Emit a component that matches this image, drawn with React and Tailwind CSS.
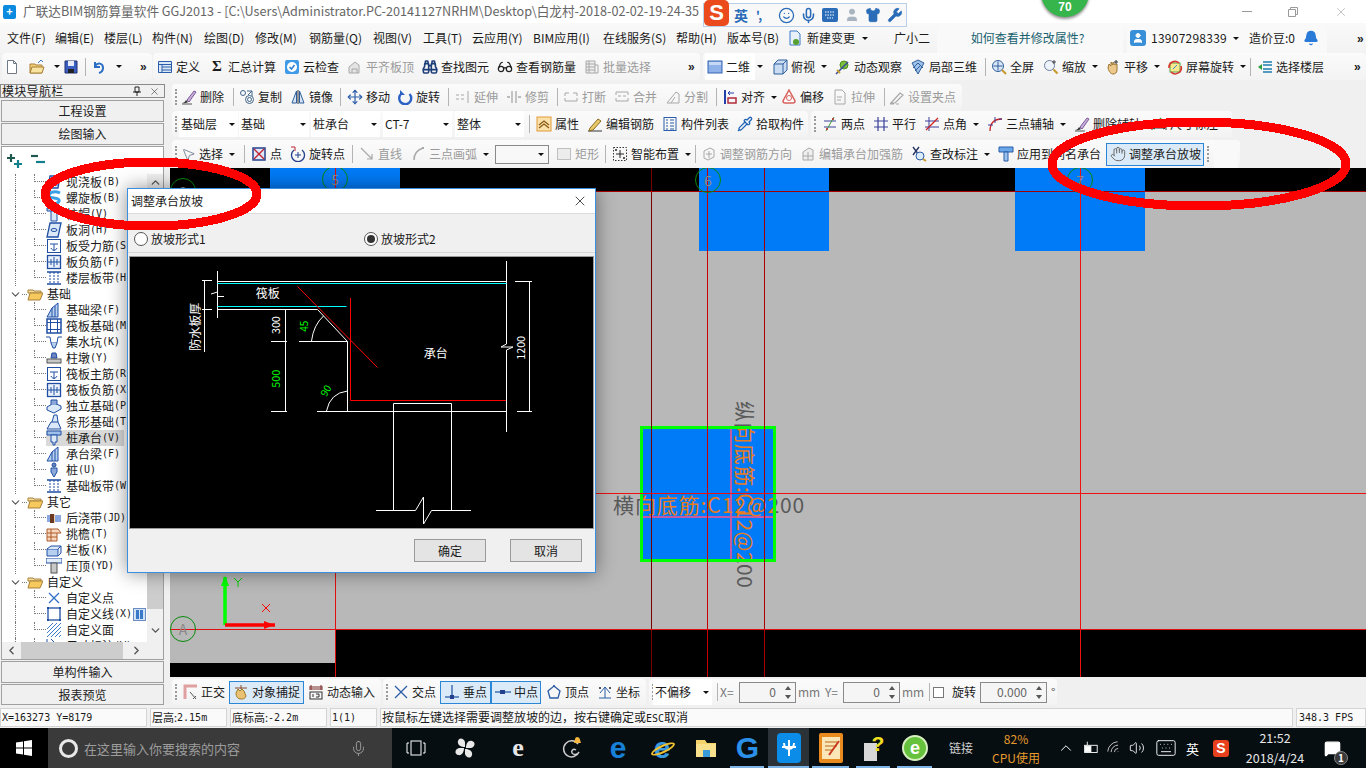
import React from 'react';
import { X, ChevronUp, ChevronDown, ChevronLeft, ChevronRight, Mic, Volume2, Wifi, Keyboard, Move, Pipette, Binoculars, Glasses, Shirt, Wrench, Smile, MessageSquare, Hand, MousePointer2, User, Bell } from 'lucide-react';

const B = '#1f4ea3';
const G = '#a8a8a8';

// toolbar + tree icons, all on a 16 grid
const I = ({ children }) => <svg viewBox="0 0 16 16" className="w-4 h-4 shrink-0" fill="none">{children}</svg>;

const ic = {
  doc: <I><path d="M3.5 1.5h6l3 3v10h-9z" fill="#fff" stroke="#6f7a86" /><path d="M9.5 1.5v3h3" stroke="#6f7a86" /></I>,
  open: <I><path d="M1 5h5l1 1h6v8H1z" fill="#f2cf74" stroke="#a8803a" /><path d="M3 8h12l-2 6H1z" fill="#f8e3a0" stroke="#a8803a" /><path d="M9 4l3-3 2 2" stroke="#3a7bc8" /></I>,
  save: <I><path d="M2 2h12v12H2z" fill="#3a5fc0" stroke="#1e2f70" /><path d="M5 2h6v5H5z" fill="#e6ecf8" /><path d="M5 10h6v4H5z" fill="#222" /></I>,
  undo: <I><path d="M4 3v5h5" stroke="#2c6fc4" strokeWidth="2" /><path d="M4 7c3-4 8-3 8 2 0 2-1 4-4 5" stroke="#2c6fc4" strokeWidth="2" /></I>,
  define: <I><path d="M1.5 2.5h13v11h-13z" fill="#dbe8f8" stroke="#2b5da8" /><path d="M1.5 5.5h13M5 5.5v8M5 8h9M5 11h9" stroke="#2b5da8" /></I>,
  sigma: <span className="w-4 h-4 shrink-0 flex items-center justify-center text-[15px] font-bold leading-none [font-family:'Liberation_Serif',serif]">Σ</span>,
  cloud: <I><rect x="1" y="1" width="14" height="14" rx="2" fill="#3f9be8" /><circle cx="8" cy="8" r="5" fill="#fff" /><path d="M5.5 8l2 2 3-4" stroke="#2c7ed0" strokeWidth="1.5" /></I>,
  flush: <I><path d="M2 14V8l6-5 4 3v8z" fill="#e4e4e4" stroke={G} /><path d="M5 14v-4h5v4" stroke={G} /></I>,
  bino: <span className="w-4 h-4 shrink-0 text-[#1d3e78]"><Binoculars size={16} strokeWidth={2.4} /></span>,
  glass: <span className="w-4 h-4 shrink-0 text-[#222]"><Glasses size={16} strokeWidth={1.8} /></span>,
  batch: <I><path d="M2 2h9v12H2z" fill="#eee" stroke={G} /><path d="M2 5h9M2 8h9M2 11h9M5 2v12M11 6h3v8h-3" stroke={G} /></I>,
  square: <I><rect x="1" y="2" width="14" height="12" fill="#8fb3e8" stroke="#3463b4" /><rect x="2" y="3" width="12" height="3" fill="#c6daf6" /></I>,
  box3d: <I><path d="M2 5l4-4h9v10l-4 4H2z" fill="#c9dcf2" stroke="#2e5f9c" /><path d="M2 5h9v10M11 5l4-4" stroke="#2e5f9c" /></I>,
  orbit: <I><circle cx="9" cy="6" r="4" fill="#7ec03a" stroke="#4a8c1e" /><path d="M1 15l12-12" stroke="#3a4c9a" strokeWidth="1.6" /><path d="M2 11l3 3" stroke="#c8a030" strokeWidth="2" /></I>,
  cubes: <I><path d="M8 1l6 3-6 11-6-11z" fill="#9fc0e8" stroke="#2e5f9c" /><path d="M3 9l5-5 5 5M5 12l6-6" stroke="#2e5f9c" /></I>,
  full: <I><circle cx="7" cy="7" r="5.5" fill="#dbe6f6" stroke="#2e5f9c" /><path d="M7 2.5v9M2.5 7h9" stroke="#2e5f9c" /><path d="M11 11l4 4" stroke="#c89a2e" strokeWidth="2" /></I>,
  zoom: <I><circle cx="6.5" cy="6.5" r="5" fill="#eef3fb" stroke="#6c7f9c" /><path d="M10.5 10.5l4 4" stroke="#c89a2e" strokeWidth="2.2" /><path d="M11 1v4M13 3H9" stroke="#444" /></I>,
  pan: <I><path d="M3 9l1-4 2 2V3l2 3V3l2 3 2-1v6c0 3-2 4-4 4s-4-2-5-6z" fill="#ecc98a" stroke="#9a7532" /><path d="M11 1v4M9 3h4" stroke="#333" /></I>,
  rot: <I><rect x="3" y="4" width="10" height="9" fill="#f8e88e" stroke="#54a04c" /><path d="M2 9a6 6 0 0 1 10-5M14 7a6 6 0 0 1-10 6" stroke="#d8382c" strokeWidth="1.6" /><path d="M6 10l4-4" stroke="#3a8ad0" /></I>,
  floors: <I><path d="M6 3h9M6 6h9M6 10h9M6 13h9" stroke="#1e7fb0" strokeWidth="1.6" /><path d="M1 8l4-3v6z" fill="#2aa040" /></I>,
  brush: <I><path d="M1 14c2 0 3-1 4-3l2 2c-1 1-3 1.5-6 1z" fill="#333" /><path d="M6 11L13 2l2 1-7 10z" fill="#c8b0d8" stroke="#7a5a9a" /><path d="M1 15h10" stroke="#555" /></I>,
  copy: <I><circle cx="4" cy="4" r="2.5" stroke="#41668c" /><circle cx="10.5" cy="10.5" r="4" stroke="#41668c" /><circle cx="10.5" cy="10.5" r="2" stroke="#41668c" /><path d="M8 2h5v5M13 2L9 6" stroke="#41668c" /></I>,
  mirror: <I><path d="M6.5 2L2 14h4.5zM9.5 2l4.5 12H9.5z" fill="#d8e6f6" stroke="#2e5f9c" /><path d="M8 1v14" stroke="#333" /></I>,
  move: <span className="w-4 h-4 shrink-0 text-[#2b5da8]"><Move size={16} strokeWidth={1.8} /></span>,
  rotate: <I><path d="M12.5 5a6 6 0 1 1-9 .5" stroke="#2b62c4" strokeWidth="2.4" /><path d="M3 1v5h5" fill="#2b62c4" /></I>,
  extend: <I><path d="M13 2v12M1 6h3M6 6h3M1 10h3M6 10h3" stroke={G} /></I>,
  trim: <I><path d="M6 2v12M10 2v12M1 8h3M12 8h3" stroke={G} strokeWidth="1.3" /></I>,
  breakk: <I><path d="M2 4h4M10 4h4M2 12h12M2 4v3M14 4v3M2 9v3M14 9v3" stroke={G} /></I>,
  join: <I><path d="M2 3h12M2 12h12M7 7l-3 0M9 7h3" stroke={G} /><path d="M2 3v3M14 3v3M2 9v3M14 9v3" stroke={G} /></I>,
  split: <I><path d="M2 14l9-11 3 2v9zM6 14l4-6" stroke={G} /></I>,
  align: <I><path d="M3 1v14" stroke="#2440a8" strokeWidth="2" /><path d="M6 4h6M6 4l2-2M6 4l2 2" stroke="#2440a8" /><rect x="6" y="9" width="8" height="5" stroke="#b02a3a" strokeWidth="1.5" /></I>,
  offset: <I><path d="M8 1l6 11c0 2-1 2-2 2H4c-1 0-2 0-2-2z" fill="#fff" stroke="#d6605c" strokeWidth="1.5" /><circle cx="8" cy="9" r="2.5" stroke="#d6605c" /></I>,
  stretch: <I><path d="M3 1h7l3 3v11H3z" stroke={G} /><path d="M5 8h5M5 11h4" stroke={G} /></I>,
  grip: <I><path d="M2 14l9-10 3 2-8 8zM1 15h4M7 15h3" stroke={G} strokeWidth="1.2" /></I>,
  prop: <I><rect x="1" y="1" width="14" height="14" fill="#fbe2a8" stroke="#e29a3c" /><path d="M3 9l5-4 5 4M3 12l5-4 5 4" stroke="#8a5a1a" strokeWidth="1.3" /></I>,
  pen: <I><path d="M1 15h14" stroke="#333" /><path d="M3 12l8-9 3 2-8 9-4 1z" fill="#e8c868" stroke="#8a6a20" /></I>,
  list: <I><rect x="2" y="1.5" width="12" height="13" stroke="#2b5da8" /><path d="M4 4h2M8 4h4M4 7h2M8 7h4M4 10h2M8 10h4M4 13h2M8 13h4" stroke="#2b5da8" /></I>,
  pick: <span className="w-4 h-4 shrink-0 text-[#2566b8]"><Pipette size={16} strokeWidth={2} /></span>,
  two: <I><path d="M2 5h12M2 11h12" stroke="#3a3f9a" /><path d="M4 15L12 1" stroke="#3a9a3a" /><circle cx="5" cy="13" r="1" fill="#c02020" /><circle cx="11" cy="3" r="1" fill="#c02020" /></I>,
  par: <I><path d="M1 5h14M1 11h14M5 1v14M11 1v14" stroke="#3a3f9a" strokeWidth="1.2" /></I>,
  angle: <I><path d="M1 5h14M1 11h14M5 1v14" stroke="#3a3f9a" /><path d="M2 14L14 2" stroke="#d02020" strokeWidth="1.3" /></I>,
  arc3: <I><path d="M3 15C3 7 7 3 15 3" stroke="#c82020" strokeWidth="1.3" /><path d="M1 9h5M8 1v6M12 3h3" stroke="#3a3f9a" /></I>,
  dim: <I><path d="M1 10v4M15 10v4M2 12h12M2 12l2-1M2 12l2 1M14 12l-2-1M14 12l-2 1" stroke="#333" /><path d="M6 8l4-6" stroke="#3a9a3a" strokeWidth="1.5" /></I>,
  select: <span className="w-4 h-4 shrink-0 text-[#5a6a80]"><MousePointer2 size={15} strokeWidth={1.2} /></span>,
  dot: <I><rect x="2" y="2" width="12" height="12" fill="#dfe8f8" stroke="#24408c" strokeWidth="1.5" /><path d="M3 3l10 10M13 3L3 13" stroke="#c02030" strokeWidth="1.3" /></I>,
  rotpt: <I><path d="M12 4a6.500 6.500 0 1 1-8 0" stroke="#24408c" strokeWidth="1.3" /><path d="M8 6v6M5 9h6" stroke="#24408c" /><path d="M1 1h4v4" stroke="#c02030" /></I>,
  line: <I><path d="M2 2l11 11M13 8v5H8" stroke={G} strokeWidth="1.2" /></I>,
  arc: <I><path d="M4 14c0-6 3-10 9-12" stroke={G} strokeWidth="1.5" /><rect x="12" y="1" width="2" height="2" fill={G} /></I>,
  rect: <I><rect x="1.5" y="2.5" width="13" height="11" fill="#ececec" stroke="#c0c0c0" /></I>,
  smart: <I><rect x="1.5" y="1.5" width="13" height="13" stroke="#333" strokeDasharray="1.5 1.5" /><path d="M8 4v8M4 8h8" stroke="#222" /><circle cx="4" cy="4" r="1" fill="#222" /><circle cx="12" cy="12" r="1" fill="#222" /></I>,
  adj: <I><path d="M3 5l6-3 4 2v7l-6 3-4-2z" stroke={G} /><path d="M8 5v7M5 8h6" stroke={G} /></I>,
  adj2: <I><path d="M3 14V6l6-4 4 2v10z" stroke={G} fill="#eee" /><path d="M8 6v8M3 10h10" stroke={G} /></I>,
  check: <I><path d="M2 1l6 8M8 1L2 9" stroke="#203060" strokeWidth="1.3" /><circle cx="9" cy="10" r="4" fill="#dcecf8" stroke="#2b5da8" /><path d="M12 13l3 2" stroke="#c89a2e" strokeWidth="2" /></I>,
  cap: <I><path d="M1 1h14v5H1z" fill="#6aa8e8" stroke="#2b5da8" /><path d="M6 6h4v9H6z" fill="#9ac4ee" stroke="#2b5da8" /></I>,
  hand: <span className="w-4 h-4 shrink-0 text-[#6a6a6a]"><Hand size={16} strokeWidth={1.5} /></span>,
  ortho: <I><path d="M3 15V2h12" stroke="#e0a0a0" strokeWidth="3" /><path d="M8 8l6 7M11 15l3-3" stroke="#555" /></I>,
  snap: <I><path d="M2 4h12M8 1v4" stroke="#8a4a2a" /><path d="M3 9l2-4 2 2 2-2 2 2 2 5c-1 3-3 3-5 3-3 0-5-2-5-6z" fill="#e8c272" stroke="#a07a2a" /></I>,
  dyn: <I><path d="M1 3h14M1 5h14M3 1v5M13 1v5" stroke="#7a2a2a" /><rect x="2" y="8" width="12" height="7" stroke="#333" /><path d="M5 10v3M8 10h3v3H8" stroke="#333" /></I>,
  cross: <I><path d="M2 2l12 12M14 2L2 14" stroke="#2b5da8" strokeWidth="1.3" /></I>,
  perp: <I><path d="M1 13h14" stroke="#2b5da8" strokeWidth="1.3" /><path d="M8 1v14" stroke="#2b5da8" strokeWidth="1.3" /><rect x="6" y="11" width="4" height="4" fill="#24408c" /></I>,
  mid: <I><path d="M0 8h16" stroke="#2b5da8" strokeWidth="1.3" /><rect x="5" y="6" width="5" height="4" fill="#24408c" /></I>,
  vert: <I><path d="M8 2l6 5-2 7H4L2 7z" stroke="#2b5da8" strokeWidth="1.3" /><circle cx="8" cy="2" r="1" fill="#2b5da8" /></I>,
  coord: <I><path d="M2 14h12M8 3v11M3 9l5-6 5 6" stroke="#2b5da8" /><circle cx="3" cy="4" r="1" fill="#222" /><circle cx="13" cy="4" r="1" fill="#222" /></I>,
  // tree icons
  slab: <I><path d="M4 2h10l-2 12H2z" fill="#dbe8f8" stroke={B} strokeWidth="1.3" /><path d="M3 11h10" stroke={B} /></I>,
  spiral: <I><path d="M14 3C8 0 2 3 3 6s9 1 10 4-5 5-11 3" stroke="#3aa0e8" strokeWidth="3" /></I>,
  capital: <I><path d="M1 2h14v3H1z" fill="#b8d0f0" stroke={B} /><path d="M5 5h6v10H5z" fill="#dbe8f8" stroke={B} /></I>,
  hole: <I><path d="M4 1h11l-3 14H1z" fill="#dbe8f8" stroke={B} strokeWidth="1.3" /><ellipse cx="8" cy="8" rx="3" ry="1.5" stroke={B} /></I>,
  force: <I><rect x="1.5" y="1.5" width="13" height="13" stroke={B} /><path d="M4 6h8M8 6v7M5 10c1 3 5 3 6 0" stroke={B} /></I>,
  neg: <I><rect x="1.5" y="1.5" width="13" height="13" fill="#eaf1fb" stroke={B} strokeWidth="1.3" /><path d="M2 8h12M8 3v10M5 5v6M11 5v6" stroke={B} /></I>,
  band: <I><path d="M1 2h14M1 14h14" stroke={B} strokeWidth="1.6" /><path d="M4 2v12M8 2v12M12 2v12" stroke={B} strokeDasharray="2 1" /></I>,
  beam: <I><path d="M1 15l5-9 6-5v14z" fill="#b8d0f0" stroke={B} /><path d="M6 6v9M9 4v11" stroke={B} /></I>,
  raft: <I><rect x="1" y="1" width="14" height="14" stroke={B} strokeWidth="1.5" /><rect x="4.5" y="4.5" width="7" height="7" stroke={B} /><path d="M1 4.5h14M1 11.5h14M4.5 1v14M11.5 1v14" stroke={B} /></I>,
  sump: <I><path d="M0 3h4l1 6h6l1-6h4" stroke={B} /><path d="M5 9l2 5h2l2-5" fill="#b8d0f0" stroke={B} /></I>,
  pier: <I><path d="M6 3h4l1 5H5z" fill="#6c84c0" stroke={B} /><rect x="1" y="9" width="14" height="4" fill="#c8c8c8" stroke="#555" /></I>,
  indep: <I><path d="M1 9l7-4 7 3v3l-7 4-7-3z" fill="#dbe8f8" stroke={B} /><path d="M5 7V2h6v5" fill="#8aa8d8" stroke={B} /></I>,
  strip: <I><path d="M1 15l4-7h7l3 7zM6 8l2-7h3l1 7" fill="#dbe8f8" stroke={B} /></I>,
  pile: <I><path d="M1 1h14v4H1z" fill="#9ec0ea" stroke={B} /><path d="M5 5h6v7H9v3H7v-3H5z" fill="#dbe8f8" stroke={B} /></I>,
  pin: <I><circle cx="8" cy="3" r="2" fill="#6c84c0" stroke={B} /><path d="M5 6h6v4l-3 5-3-5z" fill="#8aa8d8" stroke={B} /></I>,
  folder: <I><path d="M1 4h5l1 1h7v2H1z" fill="#f4dd9c" stroke="#a8803a" /><path d="M3 7h13l-3 7H1z" fill="#f6c95e" stroke="#a8803a" /></I>,
  after: <I><path d="M1 5h14v7H1z" fill="#8aa8e0" /><path d="M4 4h4v9H4z" fill="#6a3a20" /><path d="M8 4h1v9H8z" fill="#f0d0b0" /></I>,
  eave: <I><path d="M1 3h11l3 4h-4v8H1z" fill="#f6d8c0" stroke="#b05a2a" /><path d="M1 7h10M1 11h10M5 3v12" stroke="#b05a2a" /></I>,
  rail: <I><path d="M1 7h11v7H1z" fill="#b8d0f0" stroke={B} /><path d="M1 7l4-3h10l-3 3M12 14l3-3V4" fill="#dbe8f8" stroke={B} /></I>,
  top: <I><rect x="0" y="0" width="16" height="5" fill="#e4eefa" stroke={B} /><rect x="5" y="5" width="6" height="10" fill="#c8c8c8" stroke="#555" /></I>,
  xp: <I><path d="M3 3l10 10M13 3L3 13" stroke="#2b70c4" strokeWidth="1.3" /></I>,
  xl: <I><rect x="2" y="2" width="12" height="12" stroke={B} strokeWidth="1.3" /><rect x="1" y="1" width="2" height="2" fill={B} /><rect x="13" y="1" width="2" height="2" fill={B} /><rect x="1" y="13" width="2" height="2" fill={B} /><rect x="13" y="13" width="2" height="2" fill={B} /></I>,
  xa: <I><path d="M1 7l6-6M1 11l10-10M1 15L15 1M5 15L15 5M9 15l6-6M13 15l2-2" stroke="#3a78c8" /></I>,
  more: <I><path d="M1 1v14M5 1l6 6M1 8h8" stroke={B} /></I>,
};

const Caret = ({ cls = 'ml-[6px]' }) => <span className={`block w-0 h-0 shrink-0 border-x-[3px] border-x-transparent border-t-[3px] border-t-[#111] ${cls}`} />;

const Tool = ({ i, t, w, gray, arrow, on, cls = '' }) => (
  <div className={`flex items-center shrink-0 ${on ? 'h-[23px] border border-[#2b86d6] bg-[#dbeaf8] pl-[3px]' : 'h-full'} ${w} ${cls}`}>
    <span className="mr-[3px] shrink-0">{ic[i]}</span>
    {t && <span className={`whitespace-nowrap leading-none ${gray ? 'text-[#9b9b9b]' : 'text-[#1a1a1a]'}`}>{t}</span>}
    {arrow && <Caret />}
  </div>
);

const Sep = ({ w }) => (
  <div className={`flex items-center h-full shrink-0 ${w}`}><span className="block w-px h-[18px] bg-[#b4b4b4]" /></div>
);

const Grip = ({ w }) => (
  <div className={`flex items-center h-full shrink-0 pl-[3px] ${w}`}><span className="block w-[2px] h-[16px] border-l-2 border-dotted border-[#9a9a9a]" /></div>
);

const Chev = ({ w = 'w-[12px]' }) => <span className={`shrink-0 text-[12px] leading-none font-bold text-[#222] [font-family:'Liberation_Sans',sans-serif] ${w}`}>»</span>;

const Group = ({ w, children, cls = '' }) => (
  <div className={`flex items-center h-full shrink-0 rounded-sm bg-gradient-to-b from-[#fbfbfb] to-[#f3f3f3] ${w} ${cls}`}>{children}</div>
);

const Combo = ({ t, w, cls = '' }) => (
  <div className={`flex items-center justify-between h-full shrink-0 bg-white pl-[2px] pr-[3px] ${w} ${cls}`}>
    <span className="leading-none">{t}</span><Caret cls="" />
  </div>
);

const menus = [
  ['文件(F)', 'w-[48px]'], ['编辑(E)', 'w-[49px]'], ['楼层(L)', 'w-[48px]'], ['构件(N)', 'w-[52px]'],
  ['绘图(D)', 'w-[51px]'], ['修改(M)', 'w-[54px]'], ['钢筋量(Q)', 'w-[64px]'], ['视图(V)', 'w-[50px]'],
  ['工具(T)', 'w-[49px]'], ['云应用(Y)', 'w-[61px]'], ['BIM应用(I)', 'w-[70px]'], ['在线服务(S)', 'w-[73px]'],
  ['帮助(H)', 'w-[51px]'], ['版本号(B)', 'w-[60px]'],
];

const tree = [
  ['c', 'slab', '现浇板', '(B)'], ['c', 'spiral', '螺旋板', '(B)'], ['c', 'capital', '柱帽', '(V)'], ['c', 'hole', '板洞', '(H)'],
  ['c', 'force', '板受力筋', '(S)'], ['c', 'neg', '板负筋', '(F)'], ['l', 'band', '楼层板带', '(H)'],
  ['f', 'folder', '基础'],
  ['c', 'beam', '基础梁', '(F)'], ['c', 'raft', '筏板基础', '(M)'], ['c', 'sump', '集水坑', '(K)'], ['c', 'pier', '柱墩', '(Y)'],
  ['c', 'force', '筏板主筋', '(R)'], ['c', 'neg', '筏板负筋', '(X)'], ['c', 'indep', '独立基础', '(P)'], ['c', 'strip', '条形基础', '(T)'],
  ['s', 'pile', '桩承台', '(V)'], ['c', 'beam', '承台梁', '(F)'], ['c', 'pin', '桩', '(U)'], ['l', 'band', '基础板带', '(W)'],
  ['f', 'folder', '其它'],
  ['c', 'after', '后浇带', '(JD)'], ['c', 'eave', '挑檐', '(T)'], ['c', 'rail', '栏板', '(K)'], ['l', 'top', '压顶', '(YD)'],
  ['f', 'folder', '自定义'],
  ['c', 'xp', '自定义点'], ['c', 'xl', '自定义线', '(X)'], ['c', 'xa', '自定义面'], ['c', 'more', '尺寸标注', '(W)'],
];

const TreeRow = ({ kind, icon, label, suffix }) => {
  if (kind === 'f') {
    return (
      <div className="flex items-center h-4 pl-[7px]">
        <ChevronDown size={13} strokeWidth={2} className="shrink-0 text-[#555]" />
        <span className="w-[5px] border-b border-dotted border-[#777] mr-0 shrink-0" />
        {ic[icon]}
        <span className="ml-[4px] whitespace-nowrap leading-none">{label}</span>
      </div>
    );
  }
  return (
    <div className="flex h-4 pl-[13px]">
      <span className="w-[19px] h-full border-l border-dotted border-[#777] shrink-0" />
      <span className="w-[12px] shrink-0 border-l border-b border-dotted border-[#777] h-2" />
      <span className={`flex items-center h-full whitespace-nowrap pr-[4px] ${kind === 's' ? 'bg-[#d9d9d9]' : ''}`}>
        {ic[icon]}
        <span className="ml-[4px] leading-none">{label}</span>
        {suffix && <span className="leading-none text-[10px] [font-family:'DejaVu_Sans_Mono',monospace]">{suffix}</span>}
        {label === '自定义线' && <span className="ml-[1px] w-[13px] h-[13px] border border-[#6a8cc0] bg-[#cfe2f8] flex justify-center gap-[1px] p-[1px]"><i className="w-[3px] bg-[#3a78c8]" /><i className="w-[3px] bg-[#3a78c8]" /></span>}
      </span>
    </div>
  );
};

const Side = ({ t, cls = 'h-[22px]' }) => (
  <div className={`mx-[1px] flex items-center justify-center border border-[#a0a0a0] bg-[#f0f0f0] text-[#222] shrink-0 ${cls}`}>{t}</div>
);

const Spin = ({ v, w }) => (
  <div className={`flex items-center h-[21px] border border-[#8a8a8a] bg-[#f5f5f5] shrink-0 ${w}`}>
    <span className="flex-1 text-right leading-none text-[#666] pr-[5px]">{v}</span>
    <span className="w-[14px] flex flex-col items-center gap-[5px]">
      <span className="w-0 h-0 border-x-[3px] border-x-transparent border-b-[4px] border-b-[#555]" />
      <span className="w-0 h-0 border-x-[3px] border-x-transparent border-t-[4px] border-t-[#555]" />
    </span>
  </div>
);

const Cell = ({ t, w }) => (
  <div className={`flex items-center h-full border border-[#d4d4d4] bg-[#fafafa] pl-[1px] shrink-0 whitespace-nowrap overflow-hidden ${w}`}>{t}</div>
);

// two copies of the rotated / flat rebar labels: grey on the canvas, orange inside the cap
const FlatLabel = ({ cls }) => <span className={`absolute whitespace-nowrap leading-none text-[21px] tracking-[0.9px] [font-family:'Noto_Sans_CJK_SC',sans-serif] ${cls}`}>横向底筋:C12@200</span>;
const TallLabel = ({ cls }) => <span className={`absolute whitespace-nowrap leading-none text-[21px] tracking-[0.5px] rotate-90 origin-top-left [font-family:'Noto_Sans_CJK_SC',sans-serif] ${cls}`}>纵向底筋:C12@200</span>;

const Axis = ({ t, cls }) => (
  <span className={`absolute w-[26px] h-[26px] rounded-full border border-[#0a8a0a] flex items-center justify-center text-[14px] leading-none text-[#8a8a8a] ${cls}`}>{t}</span>
);

const AppTile = ({ w, on, line, children }) => (
  <div className={`relative flex items-center justify-center h-full shrink-0 ${w} ${on ? 'bg-[#2c3338]' : ''}`}>
    {children}
    {line && <span className={`absolute bottom-0 h-[2px] bg-[#7fb4e6] ${on ? 'left-0 right-0' : 'left-[3px] right-[4px]'}`} />}
  </div>
);

export default function App() {
  return (
    <div className="relative w-[1366px] h-[768px] overflow-hidden bg-[#f0f0f0] flex flex-col text-xs text-[#1a1a1a] [font-family:'Noto_Sans_CJK_SC','Liberation_Sans',sans-serif]">
      {/* Title bar */}
      <div className="flex items-center h-[23px] bg-white shrink-0 pl-[3px] overflow-hidden">
        <span className="w-[13px] h-[14px] rounded-[2px] bg-[#0a8be0] flex items-center justify-center text-white text-[11px] font-bold leading-none">+</span>
        <span className="ml-[7px] whitespace-nowrap text-[#666] text-[12.65px] leading-none">广联达BIM钢筋算量软件 GGJ2013 - [C:\Users\Administrator.PC-20141127NRHM\Desktop\白龙村-2018-02-02-19-24-35</span>
      </div>

      {/* Menu bar */}
      <div className="flex items-center h-[30px] shrink-0 pl-[7px] bg-gradient-to-b from-[#f9f9f9] to-[#f3f3f3]">
        {menus.map(([t, w]) => <span key={t} className={`shrink-0 whitespace-nowrap leading-none ${w}`}>{t}</span>)}
        <span className="w-[20px] shrink-0"><svg viewBox="0 0 16 16" className="w-4 h-4" fill="none"><path d="M3 1h7l3 3v11H3z" fill="#e8f0fa" stroke="#3a78c8" /><circle cx="9" cy="12" r="3" fill="#55a030" /></svg></span>
        <span className="flex items-center w-[87px] shrink-0 leading-none">新建变更<Caret cls="ml-[7px]" /></span>
        <span className="w-[43px] shrink-0 leading-none">广小二</span>
        <div className="flex items-center justify-center w-[186px] h-full bg-[#f9f9f9] shrink-0 text-[#17616f] leading-none pr-[5px]">如何查看并修改属性?</div>
        <div className="flex items-center ml-[4px] w-[200px] h-full bg-[#f9f9f9] shrink-0 pl-[3px]">
          <span className="w-[16px] h-[16px] rounded-[3px] bg-[#3a90d8] flex items-center justify-center shrink-0"><User size={12} fill="#fff" className="text-white" /></span>
          <span className="ml-[5px] leading-none tracking-[0.25px]">13907298339</span>
          <Caret cls="ml-[6px]" />
          <span className="ml-[10px] leading-none">造价豆:0</span>
          <span className="ml-[8px]"><Bell size={16} fill="#2a7ad8" className="text-[#2a7ad8]" /></span>
        </div>
        <span className="ml-[30px] shrink-0"><Chev /></span>
      </div>

      {/* Main toolbar */}
      <div className="flex items-center h-[27px] shrink-0 pl-[2px] gap-px">
        <Group w="w-[150px]" cls="pl-[2px]">
          <Tool i="doc" w="w-[25px]" />
          <Tool i="open" w="w-[34px]" arrow />
          <Tool i="save" w="w-[22px]" />
          <Sep w="w-[6px]" />
          <Tool i="undo" w="w-[49px]" arrow />
          <Chev />
        </Group>
        <Group w="w-[547px]" cls="pl-[4px]">
          <Tool i="define" t="定义" w="w-[52px]" />
          <Tool i="sigma" t="汇总计算" w="w-[75px]" />
          <Tool i="cloud" t="云检查" w="w-[63px]" />
          <Tool i="flush" t="平齐板顶" gray w="w-[75px]" />
          <Tool i="bino" t="查找图元" w="w-[75px]" />
          <Tool i="glass" t="查看钢筋量" w="w-[87px]" />
          <Tool i="batch" t="批量选择" gray w="w-[104px]" />
          <Chev />
        </Group>
        <Group w="w-[663px]" cls="ml-[2px] pl-[4px]">
          <Tool i="square" t="二维" w="w-[50px]" cls="bg-white -ml-[2px] pl-[2px]" />
          <span className="w-[17px] shrink-0 flex pl-[2px]"><Caret cls="" /></span>
          <Tool i="box3d" t="俯视" w="w-[63px]" arrow />
          <Tool i="orbit" t="动态观察" w="w-[75px]" />
          <Tool i="cubes" t="局部三维" w="w-[75px]" />
          <Sep w="w-[6px]" />
          <Tool i="full" t="全屏" w="w-[52px]" />
          <Tool i="zoom" t="缩放" w="w-[62px]" arrow />
          <Tool i="pan" t="平移" w="w-[62px]" arrow />
          <Tool i="rot" t="屏幕旋转" w="w-[83px]" arrow />
          <Sep w="w-[7px]" />
          <Tool i="floors" t="选择楼层" w="w-[97px]" />
          <Chev />
        </Group>
      </div>

      <div className="flex flex-1 min-h-0">
        {/* Module nav */}
        <div className="flex flex-col w-[170px] shrink-0 pt-[4px] pr-[5px] pb-[3px]">
          <div className="flex items-center h-[14px] shrink-0 border border-[#8a8a8a] mb-[2px] pr-[4px]">
            <span className="flex-1 leading-none pl-[1px] tracking-[0.3px]">模块导航栏</span>
            <svg viewBox="0 0 10 10" className="w-[10px] h-[10px]" fill="none"><path d="M3 1h4v5H3zM1 6h8M5 6v4" stroke="#222" /></svg>
            <X size={11} strokeWidth={1.3} className="ml-[7px] text-[#333]" />
          </div>
          <Side t="工程设置" />
          <div className="h-px shrink-0" />
          <Side t="绘图输入" />
          <div className="flex-1 min-h-0 flex flex-col mx-[1px] mt-px border border-[#a0a0a0] bg-white">
            <div className="flex items-center h-[27px] shrink-0 pl-[4px] gap-[6px]">
              <svg viewBox="0 0 18 16" className="w-[18px] h-4" fill="none"><path d="M5 1v8M1 5h8" stroke="#1f5a50" strokeWidth="2.2" /><path d="M12 7v8M8 11h8" stroke="#12808a" strokeWidth="2.2" /></svg>
              <svg viewBox="0 0 18 16" className="w-[18px] h-4 -mt-[1px]" fill="none"><path d="M1 4h7" stroke="#1f5a50" strokeWidth="2.2" /><path d="M6 10h9" stroke="#12808a" strokeWidth="2.2" /></svg>
            </div>
            <div className="flex-1 min-h-0 flex">
              <div className="flex-1 min-w-0 overflow-hidden">
                {tree.map(([kind, icon, label, suffix]) => <TreeRow key={label + kind + icon} kind={kind} icon={icon} label={label} suffix={suffix} />)}
              </div>
              <div className="w-[16px] shrink-0 bg-[#f0f0f0] flex flex-col">
                <span className="h-[17px] flex items-center justify-center shrink-0"><ChevronUp size={13} strokeWidth={2.5} className="text-[#555]" /></span>
                <span className="flex-1 bg-[#cdcdcd] mb-[13px]" />
                <span className="h-[17px] flex items-center justify-center shrink-0 mb-[3px]"><ChevronDown size={13} strokeWidth={2.5} className="text-[#555]" /></span>
              </div>
            </div>
            <div className="flex items-center h-[17px] shrink-0 bg-[#f0f0f0]">
              <span className="w-[19px] flex justify-center shrink-0"><ChevronLeft size={13} strokeWidth={2.5} className="text-[#555]" /></span>
              <span className="w-[102px] h-full bg-[#cdcdcd] shrink-0" />
              <span className="w-[26px] flex justify-center shrink-0"><ChevronRight size={13} strokeWidth={2.5} className="text-[#555]" /></span>
            </div>
          </div>
          <div className="h-px shrink-0" />
          <Side t="单构件输入" />
          <div className="h-px shrink-0" />
          <Side t="报表预览" cls="h-[21px]" />
        </div>

        {/* Work area */}
        <div className="flex-1 min-w-0 flex flex-col">
          <div className="h-[4px] shrink-0" />
          <div className="flex h-[26px] shrink-0 items-center">
            <Group w="w-[790px]" cls="ml-[2px]">
              <Grip w="w-[9px]" />
              <Tool i="brush" t="删除" w="w-[52px]" />
              <Sep w="w-[6px]" />
              <Tool i="copy" t="复制" w="w-[51px]" />
              <Tool i="mirror" t="镜像" w="w-[50px]" />
              <Sep w="w-[7px]" />
              <Tool i="move" t="移动" w="w-[50px]" />
              <Tool i="rotate" t="旋转" w="w-[51px]" />
              <Sep w="w-[7px]" />
              <Tool i="extend" t="延伸" gray w="w-[51px]" />
              <Tool i="trim" t="修剪" gray w="w-[51px]" />
              <Sep w="w-[6px]" />
              <Tool i="breakk" t="打断" gray w="w-[51px]" />
              <Tool i="join" t="合并" gray w="w-[51px]" />
              <Tool i="split" t="分割" gray w="w-[51px]" />
              <Sep w="w-[6px]" />
              <Tool i="align" t="对齐" w="w-[59px]" arrow />
              <Tool i="offset" t="偏移" w="w-[51px]" />
              <Tool i="stretch" t="拉伸" gray w="w-[52px]" />
              <Sep w="w-[5px]" />
              <Tool i="grip" t="设置夹点" gray w="w-[73px]" />
            </Group>
          </div>
          <div className="h-px shrink-0" />
          <div className="flex h-[26px] shrink-0 items-center">
            <Group w="w-[636px]" cls="ml-[2px]">
              <Grip w="w-[7px]" />
              <Combo t="基础层" w="w-[59px]" cls="mr-px" />
              <Combo t="基础" w="w-[70px]" cls="mr-[2px]" />
              <Combo t="桩承台" w="w-[69px]" cls="mr-[3px]" />
              <Combo t="CT-7" w="w-[69px]" cls="mr-[3px]" />
              <Combo t="整体" w="w-[69px]" cls="mr-[5px]" />
              <Sep w="w-[7px]" />
              <Tool i="prop" t="属性" w="w-[51px]" />
              <Tool i="pen" t="编辑钢筋" w="w-[75px]" />
              <Tool i="list" t="构件列表" w="w-[75px]" />
              <Tool i="pick" t="拾取构件" w="w-[71px]" />
            </Group>
            <Group w="w-[421px]" cls="ml-[3px]">
              <Grip w="w-[11px]" />
              <Tool i="two" t="两点" w="w-[51px]" />
              <Tool i="par" t="平行" w="w-[51px]" />
              <Tool i="angle" t="点角" w="w-[63px]" arrow />
              <Tool i="arc3" t="三点辅轴" w="w-[87px]" arrow />
              <Tool i="brush" t="删除辅轴" w="w-[77px]" />
              <Tool i="dim" t="尺寸标注" w="w-[81px]" arrow />
            </Group>
          </div>
          <div className="h-[3px] shrink-0" />
          <div className="flex h-[28px] shrink-0 items-center">
            <Group w="w-[1068px]" cls="ml-[2px]">
              <Grip w="w-[9px]" />
              <Tool i="select" t="选择" w="w-[63px]" arrow />
              <Sep w="w-[7px]" />
              <Tool i="dot" t="点" w="w-[39px]" />
              <Tool i="rotpt" t="旋转点" w="w-[62px]" />
              <Sep w="w-[7px]" />
              <Tool i="line" t="直线" gray w="w-[51px]" />
              <Tool i="arc" t="三点画弧" gray w="w-[85px]" arrow />
              <div className="w-[54px] h-[19px] border border-[#8a8a8a] bg-[#f8f8f8] flex items-center justify-end pr-[4px] shrink-0 mr-[7px]"><Caret cls="" /></div>
              <Tool i="rect" t="矩形" gray w="w-[49px]" />
              <Sep w="w-[7px]" />
              <Tool i="smart" t="智能布置" w="w-[83px]" arrow />
              <Sep w="w-[6px]" />
              <Tool i="adj" t="调整钢筋方向" gray w="w-[99px]" />
              <Tool i="adj2" t="编辑承台加强筋" gray w="w-[111px]" />
              <Tool i="check" t="查改标注" w="w-[87px]" arrow />
              <Tool i="cap" t="应用到同名承台" w="w-[108px]" />
              <Tool i="hand" t="调整承台放坡" w="w-[98px]" on />
              <Grip w="w-[10px]" />
              <div className="w-[24px] h-full bg-[#f9f9f9] shrink-0" />
            </Group>
          </div>

          {/* Drawing canvas */}
          <div className="relative flex-1 min-h-0 bg-black overflow-hidden">
            <div className="absolute left-0 right-0 top-[24px] h-[438px] bg-[#b8b8b8]" />
            <div className="absolute left-0 top-[462px] w-[165px] h-[33px] bg-[#b8b8b8]" />
            <div className="absolute left-[100px] top-0 w-[130px] h-[83px] bg-[#007bf7]" />
            <div className="absolute left-[529px] top-0 w-[130px] h-[83px] bg-[#007bf7]" />
            <div className="absolute left-[845px] top-0 w-[130px] h-[83px] bg-[#007bf7]" />
            <FlatLabel cls="left-[443px] top-[326px] text-[#5a5a5a]" />
            <TallLabel cls="left-[586px] top-[233px] text-[#5a5a5a]" />
            <div className="absolute left-[470px] top-[258px] w-[136px] h-[136px] bg-[#007bf7] overflow-hidden">
              <span className="absolute left-0 right-0 top-[90px] h-[2px] bg-[#c25aa5]" />
              <span className="absolute top-0 bottom-0 left-[90px] w-[2px] bg-[#c25aa5]" />
              <FlatLabel cls="-left-[27px] top-[68px] text-[#e87c1e]" />
              <TallLabel cls="left-[116px] -top-[25px] text-[#e87c1e]" />
            </div>
            <div className="absolute left-[470px] top-[258px] w-[136px] h-[136px] border-[3px] border-[#00ff00]" />
            <span className="absolute top-0 bottom-0 left-[165px] w-px bg-[#e01010]" />
            <span className="absolute top-0 bottom-0 left-[481px] w-px bg-[#7a0000]" />
            <span className="absolute top-0 bottom-0 left-[537px] w-px bg-[#c80000]" />
            <span className="absolute top-0 bottom-0 left-[594px] w-px bg-[#a80000]" />
            <span className="absolute top-0 bottom-0 left-[910px] w-px bg-[#f01010]" />
            <span className="absolute left-0 right-0 top-[23px] h-px bg-[#a80000]" />
            <span className="absolute left-0 right-0 top-[325px] h-px bg-[#ee1010]" />
            <span className="absolute left-0 right-0 top-[461px] h-px bg-[#e01010]" />
            <Axis t="5" cls="left-[152px] -top-[2px]" />
            <Axis t="6" cls="left-[525px] -top-[1px]" />
            <Axis t="7" cls="left-[897px] -top-[1px]" />
            <Axis t="8" cls="left-0 top-[10px]" />
            <Axis t="A" cls="left-0 top-[448px]" />
            {/* UCS marker */}
            <svg viewBox="0 0 60 60" className="absolute left-[50px] top-[406px] w-[60px] h-[60px]" fill="none">
              <path d="M5 3v48" stroke="#00ff00" strokeWidth="3.5" />
              <path d="M5 2l4 10H1z" fill="#00ff00" />
              <path d="M5 51h50" stroke="#ff0000" strokeWidth="3.5" />
              <path d="M54 51l-10 4v-8z" fill="#ff0000" />
              <path d="M14 4l4 4 4-4M18 8v5" stroke="#00d000" />
              <path d="M42 30l8 8M50 30l-8 8" stroke="#ff0000" />
            </svg>
          </div>

          {/* Snap bar */}
          <div className="flex items-center h-[26px] shrink-0 mt-[2px] mb-[3px]">
            <Group w="w-[209px]" cls="ml-[2px]">
              <Grip w="w-[10px]" />
              <Tool i="ortho" t="正交" w="w-[47px]" />
              <Tool i="snap" t="对象捕捉" w="w-[75px]" on />
              <div className="w-[4px] shrink-0" />
              <Tool i="dyn" t="动态输入" w="w-[73px]" />
            </Group>
            <Group w="w-[263px]" cls="ml-[2px]">
              <Grip w="w-[10px]" />
              <Tool i="cross" t="交点" w="w-[47px]" />
              <Tool i="perp" t="垂点" w="w-[51px]" on />
              <Tool i="mid" t="中点" w="w-[50px]" on />
              <div className="w-[5px] shrink-0" />
              <Tool i="vert" t="顶点" w="w-[51px]" />
              <Tool i="coord" t="坐标" w="w-[49px]" />
            </Group>
            <Group w="w-[408px]" cls="ml-[3px]">
              <Grip w="w-[4px]" />
              <Combo t="不偏移" w="w-[59px]" cls="mr-[5px]" />
              <Sep w="w-[3px]" />
              <span className="w-[19px] shrink-0 text-[#777] leading-none">X=</span>
              <Spin v="0" w="w-[57px]" />
              <span className="w-[29px] pl-[2px] shrink-0 text-[#777] leading-none">mm</span>
              <span className="w-[18px] shrink-0 text-[#777] leading-none">Y=</span>
              <Spin v="0" w="w-[57px]" />
              <span className="w-[29px] pl-[2px] shrink-0 text-[#777] leading-none">mm</span>
              <Sep w="w-[4px]" />
              <span className="w-[11px] h-[11px] border border-[#777] bg-white shrink-0 mr-[8px]" />
              <span className="w-[28px] shrink-0 leading-none">旋转</span>
              <Spin v="0.000" w="w-[67px]" />
              <span className="pl-[4px] text-[#555] leading-none">°</span>
            </Group>
          </div>
        </div>
      </div>

      {/* Status bar */}
      <div className="flex h-[19px] shrink-0 mb-px gap-[3px] text-[11px] leading-none">
        <Cell w="w-[147px]" t={<span className="text-[10px] [font-family:'DejaVu_Sans_Mono',monospace]">X=163273 Y=8179</span>} />
        <Cell w="w-[77px]" t={<>层高:<span className="text-[10px] [font-family:'DejaVu_Sans_Mono',monospace]">2.15m</span></>} />
        <Cell w="w-[97px]" t={<>底标高:<span className="text-[10px] [font-family:'DejaVu_Sans_Mono',monospace]">-2.2m</span></>} />
        <Cell w="w-[47px]" t={<span className="text-[10px] [font-family:'DejaVu_Sans_Mono',monospace]">1(1)</span>} />
        <Cell w="w-[913px]" t={<span className="text-xs">按鼠标左键选择需要调整放坡的边，按右键确定或<span className="text-[10px] [font-family:'DejaVu_Sans_Mono',monospace]">ESC</span>取消</span>} />
        <Cell w="w-[70px]" t={<span className="text-[10px] pl-[1px] [font-family:'DejaVu_Sans_Mono',monospace]">348.3 FPS</span>} />
      </div>

      {/* Windows taskbar */}
      <div className="flex items-center h-[40px] shrink-0 bg-[#070e12] text-white">
        <div className="w-[48px] h-full bg-black flex items-center justify-center shrink-0">
          <svg viewBox="0 0 16 16" className="w-4 h-4" fill="#fff"><path d="M0 2.5l7-1v6H0zM8 1.3L16 0v7.5H8zM0 8.5h7v6l-7-1zM8 8.5h8V16l-8-1.2z" /></svg>
        </div>
        <div className="w-[344px] h-full bg-[#3a3a3a] flex items-center pl-[11px] shrink-0">
          <span className="w-[19px] h-[19px] rounded-full border-[3px] border-[#e8e8e8] shrink-0" />
          <span className="ml-[6px] text-[13px] text-[#9c9c9c] leading-none">在这里输入你要搜索的内容</span>
          <Mic size={17} strokeWidth={1.3} className="ml-[110px] text-[#a0a0a0]" />
        </div>
        <AppTile w="w-[48px]"><svg viewBox="0 0 20 16" className="w-[20px] h-4" fill="none" stroke="#fff"><rect x="5" y="1" width="10" height="14" /><path d="M3 3H1v10h2M17 3h2v10h-2" /></svg></AppTile>
        <AppTile w="w-[50px]"><svg viewBox="0 0 20 20" className="w-5 h-5" fill="#e8e8e8"><path d="M10 9C6 9 2 7 3 3s6-3 7 1zM11 10c0-4 2-8 6-7s3 6-1 7zM10 11c4 0 8 2 7 6s-6 3-7-1zM9 10c0 4-2 8-6 7s-3-6 1-7z" /></svg></AppTile>
        <AppTile w="w-[56px]"><span className="text-[26px] leading-none text-[#e8e8e8] font-bold [font-family:'Liberation_Serif',serif]">e</span></AppTile>
        <AppTile w="w-[50px]">
          <svg viewBox="0 0 24 24" className="w-6 h-6" fill="none"><path d="M19 8a8 8 0 1 0 1 8c-1 3-6 3-7 1s1-5 4-3" stroke="#ccc" strokeWidth="1.5" /><path d="M18 1c3 0 3 3 4 6h-7c1-3 1-6 3-6z" fill="#f4b63c" /></svg>
        </AppTile>
        <AppTile w="w-[44px]"><span className="text-[30px] leading-none text-[#1780d8] font-bold [font-family:'Liberation_Sans',sans-serif]">e</span></AppTile>
        <AppTile w="w-[44px]"><span className="relative text-[30px] leading-none text-[#3a9ae0] font-bold [font-family:'Liberation_Sans',sans-serif]">e<span className="absolute left-[-4px] top-[12px] w-[26px] h-[8px] rounded-[50%] border-2 border-[#f0c030] -rotate-[25deg]" /></span></AppTile>
        <AppTile w="w-[43px]"><svg viewBox="0 0 24 24" className="w-6 h-6"><path d="M2 4h9l2 3h9v14H2z" fill="#f4d26a" /><rect x="2" y="8" width="20" height="13" fill="#f8e08c" /><rect x="9" y="14" width="7" height="7" fill="#3a9ad8" /></svg></AppTile>
        <AppTile w="w-[41px]" line><span className="text-[30px] leading-none text-[#2a90e8] font-bold [font-family:'Liberation_Sans',sans-serif]">G</span></AppTile>
        <AppTile w="w-[41px]" on line>
          <span className="w-[24px] h-[30px] rounded-[4px] bg-[#0a8ce8] flex items-center justify-center"><svg viewBox="0 0 20 20" className="w-5 h-5" fill="none" stroke="#fff" strokeWidth="2"><path d="M10 2v16M3 9h14M5 5c0 8 10 8 10 0" /></svg></span>
        </AppTile>
        <AppTile w="w-[44px]" line><svg viewBox="0 0 24 30" className="w-6 h-[30px]"><rect width="24" height="30" fill="#e88a1e" rx="2" /><rect x="3" y="4" width="18" height="22" fill="#fbe6b8" /><path d="M6 9h12M6 13h12M6 17h8" stroke="#b86a1a" /><path d="M20 8L10 22" stroke="#c83a1e" strokeWidth="2" /></svg></AppTile>
        <AppTile w="w-[41px]" line><span className="relative w-[22px] h-[30px]"><span className="absolute left-[1px] top-[10px] w-[13px] h-[18px] bg-[#d8d8d8]" /><span className="absolute left-[9px] top-0 text-[21px] font-bold leading-none text-[#f0e020] [font-family:'Liberation_Sans',sans-serif]">?</span></span></AppTile>
        <AppTile w="w-[42px]" line><span className="w-[26px] h-[26px] rounded-full bg-[#66c23c] border-2 border-[#d8f0c0] flex items-center justify-center text-white font-bold text-[18px] leading-none [font-family:'Liberation_Sans',sans-serif]">e</span></AppTile>
        <span className="w-[50px] text-center text-[#d0d0d0] leading-none shrink-0">链接</span>
        <div className="flex flex-col items-center w-[60px] shrink-0 text-[#e59a2e] leading-none gap-[7px]"><span>82%</span><span>CPU使用</span></div>
        <ChevronUp size={18} strokeWidth={1.3} className="ml-[11px] text-white shrink-0" />
        <svg viewBox="0 0 20 16" className="ml-[6px] w-[18px] h-4 shrink-0" fill="none" stroke="#fff"><rect x="4" y="5" width="14" height="8" /><rect x="5" y="6" width="6" height="6" fill="#fff" /><path d="M7 1v4" /></svg>
        <Wifi size={16} strokeWidth={1.3} className="ml-[7px] text-[#ccc] -rotate-45 shrink-0" />
        <Volume2 size={16} strokeWidth={1.3} className="ml-[7px] text-white shrink-0" />
        <Keyboard size={22} strokeWidth={1} className="ml-[10px] text-white shrink-0" />
        <span className="ml-[9px] text-[13px] leading-none shrink-0">英</span>
        <span className="ml-[14px] w-[16px] h-[17px] rounded-[3px] bg-[#e8401c] flex items-center justify-center text-white text-[14px] font-bold leading-none shrink-0 [font-family:'Liberation_Sans',sans-serif]">S</span>
        <div className="flex flex-col items-center w-[64px] ml-[14px] text-[12.5px] leading-none gap-[8px] shrink-0 text-[#e8e8e8]"><span>21:52</span><span>2018/4/24</span></div>
        <div className="relative ml-[17px] shrink-0">
          <MessageSquare size={17} fill="#fff" className="text-white" />
          <span className="absolute -right-[7px] -bottom-[8px] w-[14px] h-[14px] rounded-full bg-[#3a3a3a] border border-[#888] flex items-center justify-center text-[10px] font-bold leading-none">1</span>
        </div>
      </div>

      {/* Overlays */}
      {/* Sogou IME bar */}
      <div className="absolute left-[703px] top-[3px] w-[204px] h-[24px] border border-[#b8cfe8] bg-[#f8f8f8] flex items-center pl-[30px] text-[#2a6cb8]">
        <span className="text-[14px] font-bold leading-none w-[18px]">英</span>
        <span className="text-[12px] font-bold leading-none w-[26px] pl-[4px]">',</span>
        <Smile size={17} strokeWidth={1.8} className="mr-[5px] shrink-0" />
        <Mic size={17} strokeWidth={2.2} className="mr-[5px] shrink-0" />
        <svg viewBox="0 0 16 14" className="w-4 h-[14px] mr-[6px] shrink-0" fill="#2a6cb8"><rect width="16" height="14" rx="2" /><path d="M3 4h10M3 7h10M5 10h6" stroke="#fff" strokeDasharray="1.5 1" /></svg>
        <span className="mr-[4px] shrink-0 text-[#a8b4c0]"><User size={16} fill="#a8b4c0" strokeWidth={1} /></span>
        <Shirt size={16} fill="#2a6cb8" strokeWidth={1} className="mr-[6px] ml-[1px] shrink-0" />
        <Wrench size={16} fill="#2a6cb8" strokeWidth={1} className="shrink-0" />
      </div>
      <span className="absolute left-[704px] top-0 w-[25px] h-[26px] rounded-[5px] bg-[#ea4a1c] flex items-center justify-center text-white text-[22px] font-bold leading-none [font-family:'Liberation_Sans',sans-serif]">S</span>

      {/* Score badge */}
      <div className="absolute left-[1041px] -top-[31px] w-[48px] h-[48px] rounded-full bg-[#35b54b] shadow-[0_2px_3px_rgba(0,0,0,0.45)] flex items-end justify-center pb-[4px] text-white text-[12px] font-bold leading-none [font-family:'Liberation_Sans',sans-serif]">70</div>

      {/* Window buttons */}
      <div className="absolute right-0 top-0 h-[23px] flex items-center text-[#9a9a9a]">
        <span className="w-[46px] flex justify-center"><span className="w-[10px] h-px bg-[#9a9a9a]" /></span>
        <span className="w-[46px] flex justify-center"><svg viewBox="0 0 10 10" className="w-[10px] h-[10px]" fill="none" stroke="#9a9a9a"><path d="M2.5 2.5V.5h7v7h-2M.5 2.5h7v7h-7z" /></svg></span>
        <span className="w-[50px] flex justify-center"><X size={14} strokeWidth={1} /></span>
      </div>

      {/* Dialog */}
      <div className="absolute left-[127px] top-[188px] w-[469px] h-[385px] border border-[#3c8ede] bg-[#f0f0f0] flex flex-col shadow-[0_0_18px_rgba(0,0,0,0.45)]">
        <div className="flex items-center justify-between h-[25px] shrink-0 bg-white border-b border-[#dcdcdc] pl-[3px] pr-[7px]">
          <span className="leading-none">调整承台放坡</span>
          <X size={16} strokeWidth={1.3} className="text-[#333]" />
        </div>
        <div className="flex items-center h-[39px] shrink-0 pt-[12px] pl-[6px] border-b border-[#d8d8d8]">
          <span className="w-[14px] h-[14px] rounded-full border border-[#555] bg-white shrink-0" />
          <span className="ml-[3px] w-[213px] leading-none shrink-0">放坡形式1</span>
          <span className="w-[14px] h-[14px] rounded-full border border-[#555] bg-white flex items-center justify-center shrink-0"><span className="w-[8px] h-[8px] rounded-full bg-[#333]" /></span>
          <span className="ml-[3px] leading-none">放坡形式2</span>
        </div>
        <div className="mx-[1px] mt-[3px] h-[273px] shrink-0 bg-black border border-[#9a9a9a]">
          <svg viewBox="0 0 463 271" className="w-full h-full block" fill="none" strokeWidth="1" stroke="#fff">
            <path d="M87.5 24.500H376.500M87.500 14V61M87.500 52.500H187.500L217.500 84.500V154.500M169 84.500H217.500M141 84.500H157M141 154.500H157M155.500 52.500V154.500M187 154.500H376.500M376.500 4V87L371 90H383L376.500 93V175M385 24.500H402M387 154.500H402M399.500 24.500V154.500M74.500 23.500V95M72 23.500H82M72 52.500H82M81 37L87.500 35V39.500H94" />
            <path d="M263.500 253.500V146.500H321.500V253.500M246 253.500H285.500L293.500 240V267L301.500 253.500H341M181.500 84Q183.500 68 193.500 59M196.500 154Q200 136 217.500 134" />
            <path d="M87.500 26.500H376.500M87.500 49.500H216.500" stroke="#00ffff" />
            <path d="M167.500 29.500L247.500 110.500M220.500 41V143.500H376" stroke="#ff0000" />
            <g stroke="none" fill="#fff" fontSize="12" style={{ fontFamily: "'Noto Sans CJK SC',sans-serif" }}>
              <text x="125.700" y="40.700">筏板</text>
              <text x="293.700" y="101">承台</text>
              <text transform="translate(70.300 93.700) rotate(-90)">防水板厚</text>
              <text transform="translate(150.300 77) rotate(-90)" fontSize="10.700">300</text>
              <text transform="translate(395 102.700) rotate(-90)" fontSize="10.700">1200</text>
              <g fill="#00ff00">
                <text transform="translate(150.300 130.700) rotate(-90)" fontSize="10.700">500</text>
                <text transform="translate(178 74.700) rotate(-90)" fontSize="10">45</text>
                <text transform="translate(196.300 140.300) rotate(-60)" fontSize="10">90</text>
              </g>
            </g>
          </svg>
        </div>
        <div className="flex-1 flex items-center justify-end pr-[13px] gap-[24px]">
          <span className="w-[72px] h-[23px] border border-[#9a9a9a] bg-[#e4e4e4] flex items-center justify-center leading-none">确定</span>
          <span className="w-[72px] h-[23px] border border-[#9a9a9a] bg-[#e4e4e4] flex items-center justify-center leading-none">取消</span>
        </div>
      </div>

      {/* Hand-drawn red annotations */}
      <svg viewBox="0 0 232 84" className="absolute left-[35px] top-[152px] w-[232px] h-[84px]" fill="none"><ellipse cx="116" cy="42" rx="106" ry="32" stroke="#ff0000" strokeWidth="9" shapeRendering="crispEdges" /></svg>
      <svg viewBox="0 0 314 104" className="absolute left-[1042px] top-[112px] w-[314px] h-[104px]" fill="none"><ellipse cx="157" cy="52" rx="147" ry="42" stroke="#ff0000" strokeWidth="9" shapeRendering="crispEdges" /></svg>
    </div>
  );
}
